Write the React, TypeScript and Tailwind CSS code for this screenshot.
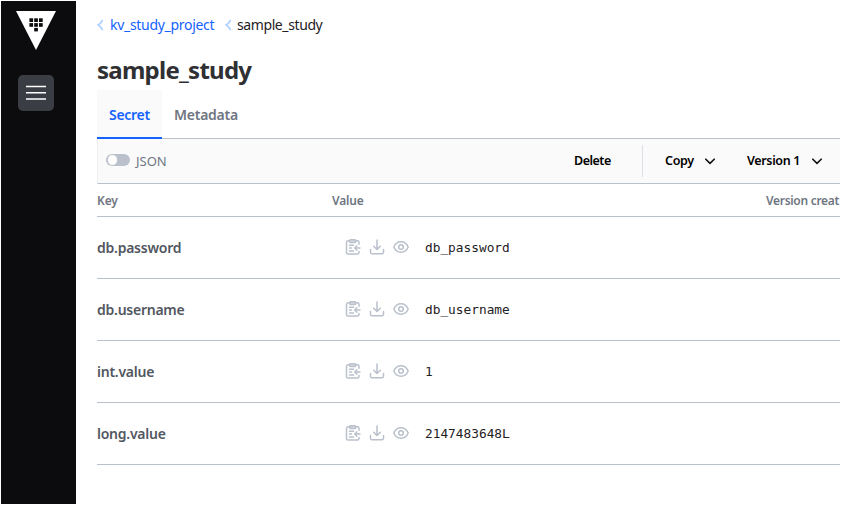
import React from "react";

const rows = [
  { key: "db.password", value: "db_password" },
  { key: "db.username", value: "db_username" },
  { key: "int.value", value: "1" },
  { key: "long.value", value: "2147483648L" },
];

function VaultLogo() {
  return (
    <svg width="40" height="39" viewBox="0 0 40 39" className="ml-[15px] block">
      <path d="M0 0H40L20 39Z" fill="#fff" />
      <g fill="#0c0c0e">
        {[13.4, 18.2, 23].map((x) => (
          <React.Fragment key={x}>
            <rect x={x} y="7.3" width="3.7" height="3.7" />
            <rect x={x} y="12.1" width="3.7" height="3.7" />
          </React.Fragment>
        ))}
        <rect x="18.2" y="16.9" width="3.7" height="3.5" />
      </g>
    </svg>
  );
}

function Crumb() {
  return (
    <svg width="7" height="12" viewBox="0 0 7 12" fill="none" stroke="#b2d1ff" strokeWidth="1.8" className="shrink-0">
      <path d="M5.6 .8C4.6 3.2 3 4.8 1.3 6C3 7.2 4.6 8.8 5.6 11.2" />
    </svg>
  );
}

function Chevron() {
  return (
    <svg width="10" height="7" viewBox="0 0 10 7" fill="none" stroke="#111" strokeWidth="1.6" strokeLinecap="round" strokeLinejoin="round" className="mt-px shrink-0">
      <path d="M.8 1.2L5 5.4L9.2 1.2" />
    </svg>
  );
}

function RowIcons() {
  return (
    <div className="mb-px flex w-[80px] shrink-0 gap-2 text-[#bac1cc]">
      <svg width="16" height="16" viewBox="0 0 16 16" fill="none" stroke="currentColor" strokeWidth="1.5" strokeLinecap="round" strokeLinejoin="round">
        <path d="M4.5 1.8H3A1.6 1.6 0 0 0 1.5 3.4V13.4A1.6 1.6 0 0 0 3.1 15H12.4A1.6 1.6 0 0 0 14 13.4V12.6M14 5.2V3.4A1.6 1.6 0 0 0 12.4 1.8H11" />
        <rect x="4.6" y=".8" width="6.2" height="2.6" rx="1" fill="#d6dae1" />
        <path d="M4.5 6.2H8.6M4.5 9H6.5M4.5 12H8.6M15 9H9.8M11.9 6.8L9.7 9L11.9 11.2" strokeWidth="1.4" />
      </svg>
      <svg width="16" height="16" viewBox="0 0 16 16" fill="none" stroke="currentColor" strokeWidth="1.5" strokeLinecap="round" strokeLinejoin="round">
        <path d="M8 1V10.3M4.7 7.3L8 10.5L11.3 7.3M1.5 10.5V13.3A1.4 1.4 0 0 0 2.9 14.7H13.1A1.4 1.4 0 0 0 14.5 13.3V10.5" />
      </svg>
      <svg width="16" height="16" viewBox="0 0 16 16" fill="none" stroke="currentColor" strokeWidth="1.5">
        <path d="M.8 8C2.2 4.7 4.8 2.8 8 2.8S13.8 4.7 15.2 8C13.8 11.3 11.2 13.2 8 13.2S2.2 11.3 .8 8Z" />
        <circle cx="8" cy="8" r="2.3" />
      </svg>
    </div>
  );
}

export default function App() {
  return (
    <div className="flex h-[505px] w-[841px] overflow-hidden bg-white p-px font-['Noto_Sans','Open_Sans',sans-serif]">
      <aside className="h-[503px] w-[75px] shrink-0 bg-[#0c0c0e] pt-[10px]">
        <VaultLogo />
        <button className="mt-[25px] ml-[17px] flex h-9 w-9 items-center justify-center rounded-[5px] bg-[#3b3d45]">
          <svg width="20" height="16" viewBox="0 0 20 16" stroke="#fff" strokeWidth="1.5">
            <path d="M0 1.6H20M0 7.8H20M0 14H20" />
          </svg>
        </button>
      </aside>
      <main className="ml-[21px] flex w-[743px] shrink-0 flex-col overflow-hidden whitespace-nowrap">
        <nav className="flex h-[48px] shrink-0 items-center text-[14px] leading-5">
          <Crumb />
          <a className="ml-[6px] w-[115px] tracking-[-0.3px] text-[#1563ff]">kv_study_project</a>
          <Crumb />
          <span className="ml-[5px] tracking-[-0.4px] text-[#1f2124]">sample_study</span>
        </nav>
        <h1 className="mt-[4px] h-[37px] shrink-0 text-[24px] leading-[34px] font-bold tracking-[-0.75px] text-[#2f3033]">sample_study</h1>
        <div className="flex h-[49px] shrink-0 border-b border-[#bac1cc] text-[14px] leading-[50px] font-semibold">
          <div className="h-[49px] w-[65px] shrink-0 border-b-2 border-[#1563ff] bg-[#fafafa] pl-3 tracking-[-0.3px] text-[#1563ff]">Secret</div>
          <div className="pl-3 tracking-[-0.25px] text-[#6f7682]">Metadata</div>
        </div>
        <div className="flex h-[45px] shrink-0 items-center border-b border-l border-b-[#bac1cc] border-l-[#ebeef2] bg-[#fafafa] text-[13px] font-semibold text-black">
          <div className="mb-[2px] ml-[8px] flex h-3 w-6 items-center rounded-full bg-[#bac1cc] pl-[2px]">
            <span className="h-[10px] w-[9px] rounded-full bg-white" />
          </div>
          <span className="mt-[2px] ml-[6px] w-[438px] text-[13px] font-normal text-[#6f7682]">JSON</span>
          <span className="mt-px w-[68px] text-[12.5px] tracking-[-0.5px]">Delete</span>
          <span className="h-8 w-px bg-[#dce0e6]" />
          <span className="mt-px ml-[22px] w-[40px] text-[12.5px] tracking-[-0.3px]">Copy</span>
          <Chevron />
          <span className="mt-px ml-[32px] w-[65px] text-[12.5px] tracking-[-0.35px]">Version 1</span>
          <Chevron />
        </div>
        <div className="flex h-[33px] shrink-0 items-center border-b border-[#bac1cc] pt-[2px] text-[12px] font-semibold text-[#6f7682]">
          <span className="w-[235px] shrink-0 tracking-[-0.1px]">Key</span>
          <span className="w-[434px] shrink-0 tracking-[-0.15px]">Value</span>
          <span className="tracking-[-0.3px]">Version creat</span>
        </div>
        {rows.map((row) => (
          <div key={row.key} className="flex h-[62px] shrink-0 items-center border-b border-[#bac1cc]">
            <span className="w-[248px] shrink-0 text-[14px] font-semibold tracking-[-0.25px] text-[#525761]">{row.key}</span>
            <RowIcons />
            <span className="font-['DejaVu_Sans_Mono',monospace] text-[12.8px] text-[#1f2124]">{row.value}</span>
          </div>
        ))}
      </main>
    </div>
  );
}
